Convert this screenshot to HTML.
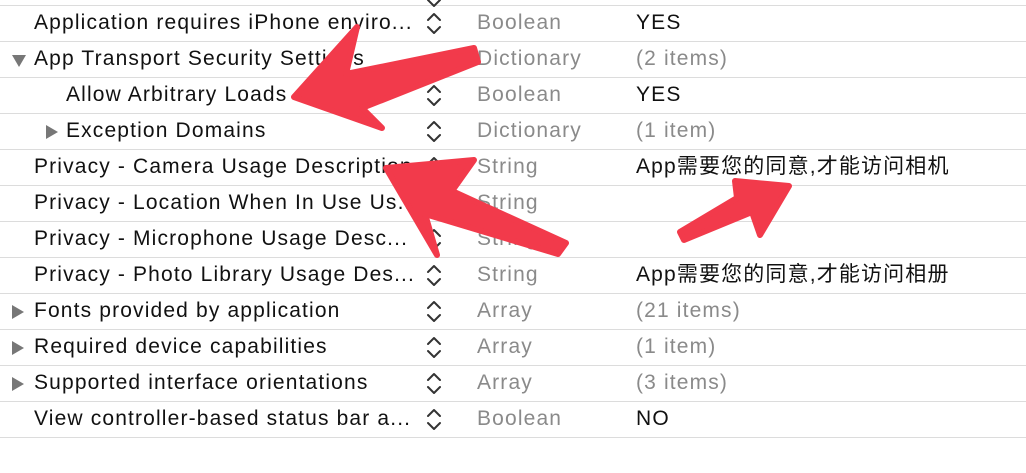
<!DOCTYPE html>
<html><head><meta charset="utf-8"><style>
body{margin:0;width:1026px;height:456px;background:#fff;overflow:hidden;position:relative;font-family:"Liberation Sans","Noto Sans CJK SC",sans-serif;font-size:21px;letter-spacing:1.15px;color:#111}
.r{position:absolute;left:0;width:1026px;height:36px;border-top:1px solid #dcdcdc;box-sizing:border-box}
.r span{position:absolute;top:5px;white-space:nowrap;line-height:24px}
.k{left:34px}.k2{left:66px}.t{left:477px;color:#8a8a8a}.v{left:636px}
.g{color:#8a8a8a}
.tri{position:absolute;top:11px;width:0;height:0}
</style></head><body>
<div class="r" style="top:-31px"></div>
<div class="r" style="top:5px"><span class="k">Application requires iPhone enviro...</span><span class="t">Boolean</span><span class="v">YES</span></div>
<div class="r" style="top:41px"><div class="tri" style="left:12px;top:13px;border-left:7px solid transparent;border-right:7px solid transparent;border-top:12px solid #777"></div><span class="k">App Transport Security Settings</span><span class="t">Dictionary</span><span class="v g">(2 items)</span></div>
<div class="r" style="top:77px"><span class="k2">Allow Arbitrary Loads</span><span class="t">Boolean</span><span class="v">YES</span></div>
<div class="r" style="top:113px"><div class="tri" style="left:46px;border-top:7px solid transparent;border-bottom:7px solid transparent;border-left:12px solid #777"></div><span class="k2">Exception Domains</span><span class="t">Dictionary</span><span class="v g">(1 item)</span></div>
<div class="r" style="top:149px"><span class="k">Privacy - Camera Usage Description</span><span class="t">String</span><span class="v">App需要您的同意,才能访问相机</span></div>
<div class="r" style="top:185px"><span class="k">Privacy - Location When In Use Us...</span><span class="t">String</span></div>
<div class="r" style="top:221px"><span class="k">Privacy - Microphone Usage Desc...</span><span class="t">String</span></div>
<div class="r" style="top:257px"><span class="k">Privacy - Photo Library Usage Des...</span><span class="t">String</span><span class="v">App需要您的同意,才能访问相册</span></div>
<div class="r" style="top:293px"><div class="tri" style="left:12px;border-top:7px solid transparent;border-bottom:7px solid transparent;border-left:12px solid #777"></div><span class="k">Fonts provided by application</span><span class="t">Array</span><span class="v g">(21 items)</span></div>
<div class="r" style="top:329px"><div class="tri" style="left:12px;border-top:7px solid transparent;border-bottom:7px solid transparent;border-left:12px solid #777"></div><span class="k">Required device capabilities</span><span class="t">Array</span><span class="v g">(1 item)</span></div>
<div class="r" style="top:365px"><div class="tri" style="left:12px;border-top:7px solid transparent;border-bottom:7px solid transparent;border-left:12px solid #777"></div><span class="k">Supported interface orientations</span><span class="t">Array</span><span class="v g">(3 items)</span></div>
<div class="r" style="top:401px"><span class="k">View controller-based status bar a...</span><span class="t">Boolean</span><span class="v">NO</span></div>
<div class="r" style="top:437px"></div>
<svg width="1026" height="456" style="position:absolute;left:0;top:0">
<g fill="none" stroke="#333" stroke-width="2" stroke-linecap="round" stroke-linejoin="round">
<path d="M428 -4l6 -6 6 6M428 0l6 6 6-6"/>
<path d="M428 20l6-6 6 6M428 27l6 6 6-6"/>
<path d="M428 92l6-6 6 6M428 99l6 6 6-6"/>
<path d="M428 128l6-6 6 6M428 135l6 6 6-6"/>
<path d="M428 164l6-6 6 6M428 171l6 6 6-6"/>
<path d="M428 200l6-6 6 6M428 207l6 6 6-6"/>
<path d="M428 236l6-6 6 6M428 243l6 6 6-6"/>
<path d="M428 272l6-6 6 6M428 279l6 6 6-6"/>
<path d="M428 308l6-6 6 6M428 315l6 6 6-6"/>
<path d="M428 344l6-6 6 6M428 351l6 6 6-6"/>
<path d="M428 380l6-6 6 6M428 387l6 6 6-6"/>
<path d="M428 416l6-6 6 6M428 423l6 6 6-6"/>
</g>
<g fill="#f23a4b" stroke="#f23a4b" stroke-width="6" stroke-linejoin="round">
<path d="M294 97L357 27L346 74L474 48L478 62L362 108L382 128Z"/>
<path d="M386 168L474 160L452 191L566 243L558 254L425 214L437 255Z"/>
<path d="M789 186L760 235L752 212L684 240L680 232L737 198L735 181Z"/>
</g>
</svg>
</body></html>
